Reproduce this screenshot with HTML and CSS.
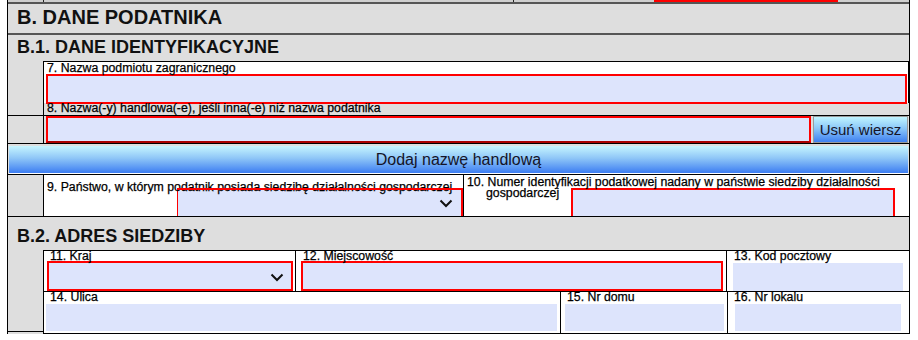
FILE: index.html
```html
<!DOCTYPE html>
<html lang="pl">
    <head>
        <meta charset="UTF-8">
        <meta name="viewport" content="width=device-width, initial-scale=1.0">
        <title>B. Dane podatnika</title>
        <link rel="stylesheet" href="styles.css">
    </head>

    <body>
        <div class="sheet">
            <!-- end of the previous section -->
            <div class="prev">
                <div class="prev-gutter"></div>
                <div class="prev-cell"></div>
                <div class="prev-red"></div>
            </div>

            <div class="sec-title">B. DANE PODATNIKA</div>
            <div class="sub-title">B.1. DANE IDENTYFIKACYJNE</div>

            <div class="row row-7">
                <div class="gutter"></div>
                <div class="col-7">
                    <div class="box-7">
                        <div class="lbl">7. Nazwa podmiotu zagranicznego</div>
                        <div class="inp req inp-7"></div>
                    </div>
                    <div class="lbl lbl-8">8. Nazwa(-y) handlowa(-e), jeśli inna(-e) niż nazwa podatnika</div>
                </div>
            </div>

            <div class="row row-8">
                <div class="gutter"></div>
                <div class="main-8">
                    <div class="inp req inp-8"></div>
                    <button class="btn btn-del">Usuń wiersz</button>
                </div>
            </div>

            <button class="btn btn-add">Dodaj nazwę handlową</button>

            <div class="row row-9">
                <div class="gutter"></div>
                <div class="box-9">
                    <div class="lbl lbl-9">9. Państwo, w którym podatnik posiada siedzibę działalności gospodarczej</div>
                    <div class="inp sel-9">
                        <svg width="14" height="9" viewBox="0 0 14 9"><path d="M1.5 1.5 L7 7 L12.5 1.5" fill="none" stroke="#111" stroke-width="2"/></svg>
                    </div>
                </div>
                <div class="box-10">
                    <div class="lbl lbl-10">10. Numer identyfikacji podatkowej nadany w państwie siedziby działalności gospodarczej</div>
                    <div class="inp inp-10"></div>
                </div>
            </div>

            <div class="sub-title sub-title-b2">B.2. ADRES SIEDZIBY</div>

            <div class="row row-addr">
                <div class="gutter gutter-addr"></div>
                <div class="addr">
                    <div class="addr-row">
                        <div class="cell c-11">
                            <div class="lbl">11. Kraj</div>
                            <div class="inp req inp-11">
                                <svg width="14" height="9" viewBox="0 0 14 9"><path d="M1.5 1.5 L7 7 L12.5 1.5" fill="none" stroke="#111" stroke-width="2"/></svg>
                            </div>
                        </div>
                        <div class="cell c-12">
                            <div class="lbl">12. Miejscowość</div>
                            <div class="inp req inp-12"></div>
                        </div>
                        <div class="cell c-13">
                            <div class="lbl">13. Kod pocztowy</div>
                            <div class="inp inp-13"></div>
                        </div>
                    </div>
                    <div class="addr-row addr-row-2">
                        <div class="cell c-14">
                            <div class="lbl">14. Ulica</div>
                            <div class="inp inp-14"></div>
                        </div>
                        <div class="cell c-15">
                            <div class="lbl">15. Nr domu</div>
                            <div class="inp inp-15"></div>
                        </div>
                        <div class="cell c-16">
                            <div class="lbl">16. Nr lokalu</div>
                            <div class="inp inp-16"></div>
                        </div>
                    </div>
                </div>
            </div>
        </div>
    </body>
</html>
```

FILE: styles.css
```css
* {
    box-sizing: border-box;
    margin: 0;
    padding: 0;
}
body {
    background-color: #fff;
    font-family: "Liberation Sans", Arial, sans-serif;
    color: #000;
}
.sheet {
    margin-left: 7px;
    width: 903px;
    background-color: #dedede;
    border-left: 1px solid #000;
    border-right: 1px solid #000;
}
.prev {
    display: flex;
    height: 4px;
    border-bottom: 2px solid #555;
    background-color: #cfcfcf;
}
.prev-gutter {
    width: 36px;
    border-right: 1px solid #222;
}
.prev-cell {
    width: 470px;
    border-right: 1px solid #222;
}
.prev-red {
    margin-left: 140px;
    width: 184px;
    height: 2px;
    background-color: #f00;
}
.sec-title {
    height: 31px;
    padding-left: 9px;
    font-size: 20px;
    font-weight: bold;
    line-height: 26px;
    color: #111;
    border-bottom: 2px solid #555;
}
.sub-title {
    height: 26px;
    padding-left: 9px;
    font-size: 18px;
    font-weight: bold;
    line-height: 24px;
    color: #111;
}
.sub-title-b2 {
    height: 33px;
    padding-top: 6px;
    line-height: 26px;
}
.row {
    display: flex;
}
.gutter {
    width: 35px;
    flex-shrink: 0;
}
.lbl {
    font-size: 12.3px;
    line-height: 11px;
    white-space: nowrap;
    padding-left: 3px;
    -webkit-text-stroke: 0.25px #000;
}
.inp {
    background-color: #dde4fc;
}
.req {
    border: 2px solid #f00;
}

/* field 7 and label 8 */
.row-7 {
    height: 54px;
}
.col-7 {
    flex: 1;
}
.box-7 {
    height: 42px;
    background-color: #fff;
    border: 1px solid #000;
    border-bottom: none;
    padding-top: 1px;
}
.inp-7 {
    height: 30px;
    margin: 0 1px 0 2px;
}
.lbl-8 {
    height: 12px;
    border-left: 1px solid #000;
}

/* field 8 with delete button */
.row-8 {
    height: 29px;
    border-top: 1px solid #000;
    border-bottom: 1px solid #000;
}
.main-8 {
    flex: 1;
    display: flex;
    gap: 2px;
    padding: 0 1px 0 2px;
    border-left: 1px solid #000;
}
.inp-8 {
    flex: 1;
    border-bottom-color: #a00;
}
.btn {
    font-family: "Liberation Sans", Arial, sans-serif;
    color: #141428;
    cursor: pointer;
}
.btn-del {
    width: 95px;
    font-size: 15px;
    border: 1px solid #9a9a9a;
    background: linear-gradient(#bff4ff 0%, #8cc8f8 45%, #3f80f0 100%);
}
.btn-add {
    display: block;
    width: 899px;
    height: 28px;
    margin: 2px 1px 0 1px;
    font-size: 16px;
    border: none;
    border-bottom: 1px solid #fff;
    background: linear-gradient(#c6f5ff 0%, #8fc6f7 45%, #3c7df2 100%);
}
.btn-add:hover, .btn-del:hover {
    filter: brightness(1.05);
}

/* fields 9 and 10 */
.row-9 {
    height: 43px;
    border-top: 1px solid #000;
    border-bottom: 1px solid #000;
}
.box-9 {
    width: 420px;
    background-color: #fff;
    border-left: 1px solid #000;
    padding-top: 7px;
}
.lbl-9 {
    position: relative;
    z-index: 1;
    height: 11px;
}
.sel-9 {
    position: relative;
    display: flex;
    justify-content: flex-end;
    align-items: center;
    width: 286px;
    height: 28px;
    margin: -5px 0 0 133px;
    padding: 3px 8px 0 0;
    border-left: 1px solid #f00;
    border-right: 2px solid #f00;
}
/* the red top edge is drawn across the label text */
.sel-9::before {
    content: "";
    position: absolute;
    top: 0;
    left: -1px;
    right: -2px;
    height: 2px;
    background-color: #f00;
    z-index: 2;
}
.box-10 {
    flex: 1;
    background-color: #fff;
    border-left: 1px solid #000;
    padding-top: 2px;
}
.lbl-10 {
    white-space: normal;
    width: 430px;
    padding-left: 22px;
    text-indent: -19px;
}
.inp-10 {
    width: 324px;
    height: 28px;
    margin: -11px 0 0 107px;
    border: 2px solid #f00;
    border-bottom: none;
}

/* B.2 address */
.gutter-addr {
    height: 82px;
    border-bottom: 1px solid #000;
}
.addr {
    flex: 1;
    background-color: #fff;
    border: 1px solid #000;
    border-right: none;
}
.addr-row {
    display: flex;
    height: 41px;
    border-bottom: 1px solid #000;
}
.addr-row-2 {
    border-bottom: none;
}
.cell {
    border-right: 1px solid #000;
}
.cell .lbl {
    line-height: 10px;
    height: 10px;
}
.c-11 {
    width: 252px;
}
.c-11 .lbl {
    padding-left: 6px;
}
.inp-11 {
    display: flex;
    justify-content: flex-end;
    align-items: center;
    width: 246px;
    height: 30px;
    margin-left: 3px;
    padding: 2px 7px 0 0;
}
.c-12 {
    width: 431px;
}
.c-12 .lbl {
    padding-left: 7px;
}
.inp-12 {
    width: 422px;
    height: 30px;
    margin-left: 5px;
}
.c-13 {
    flex: 1;
    border-right: none;
}
.c-13 .lbl {
    padding-left: 7px;
}
.inp-13 {
    width: 170px;
    height: 28px;
    margin: 2px 0 0 6px;
}
.c-14 {
    width: 517px;
}
.c-14 .lbl {
    padding-left: 6px;
}
.inp-14 {
    width: 511px;
    height: 27px;
    margin: 2px 0 0 2px;
}
.c-15 {
    width: 167px;
}
.c-15 .lbl {
    padding-left: 6px;
}
.inp-15 {
    width: 159px;
    height: 27px;
    margin: 2px 0 0 4px;
}
.c-16 {
    flex: 1;
    border-right: none;
}
.c-16 .lbl {
    padding-left: 6px;
}
.inp-16 {
    width: 166px;
    height: 27px;
    margin: 2px 0 0 7px;
}
```
